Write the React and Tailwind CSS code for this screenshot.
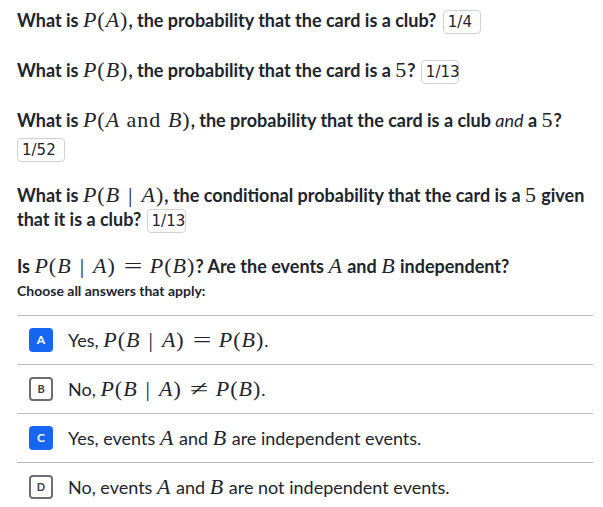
import React from "react";

const I = ({ children }) => <span className="italic">{children}</span>;

function M({ children }) {
  return (
    <span className="font-['Liberation_Serif',serif] font-normal text-[22px] leading-none tracking-[1px]">
      {children}
    </span>
  );
}

const Rel = ({ children }) => (
  <span className="inline-block w-[16px] text-center scale-x-[1.5] mx-[9px] tracking-normal">{children}</span>
);
const Bar = () => <span className="mx-[8px]">|</span>;

function Box({ children, w }) {
  return (
    <span
      className={
        "inline-block align-middle -my-[4px] border border-[#cfd1d4] rounded-[4px] pl-[4px] h-[24px] leading-[22px] font-['DejaVu_Sans',sans-serif] font-normal text-[15px] text-[#21242c] text-left whitespace-nowrap " +
        w
      }
    >
      {children}
    </span>
  );
}

function Badge({ letter, selected }) {
  return selected ? (
    <span className="w-[24px] h-[24px] shrink-0 rounded-[4px] bg-[#1865f2] text-white flex items-center justify-center text-[12px] font-bold font-['Lato',sans-serif]">
      {letter}
    </span>
  ) : (
    <span className="w-[24px] h-[24px] shrink-0 rounded-[4px] border-2 border-[#6b6d73] text-[#3b3d45] flex items-center justify-center text-[11px] font-bold font-['Lato',sans-serif]">
      {letter}
    </span>
  );
}

function Option({ letter, selected, children }) {
  return (
    <div className="flex items-center h-[49px] border-t border-[#bababe] pl-[12px]">
      <Badge letter={letter} selected={selected} />
      <div className="ml-[15px] text-[18px] leading-[24px] text-[#21242c]">{children}</div>
    </div>
  );
}

export default function App() {
  return (
    <div className="w-[603px] h-[507px] overflow-hidden bg-white pl-[17px] pr-[10px] pt-[8px] font-['Lato',sans-serif] text-[#21242c]">
      <p className="text-[18px] font-bold leading-[25px] mb-[25px]">
        What is <M><I>P</I>(<I>A</I>)</M>, the probability that the card is a club? <Box w="w-[38px] ml-[2px]">1/4</Box>
      </p>
      <p className="text-[18px] font-bold leading-[25px] mb-[25px]">
        What is <M><I>P</I>(<I>B</I>)</M>, the probability that the card is a <M>5</M>? <Box w="w-[38px] ml-[1px]">1/13</Box>
      </p>
      <div className="text-[18px] font-bold leading-[25px] mb-[22px]">
        <p>
          What is <M><I>P</I>(<I>A</I> and <I>B</I>)</M>, the probability that the card is a club <span className="italic font-normal">and</span> a <M>5</M>?
        </p>
        <p className="mt-[3px]">
          <Box w="w-[48px]">1/52</Box>
        </p>
      </div>
      <p className="text-[18px] font-bold leading-[24px] mb-[23px]">
        What is <M><I>P</I>(<I>B</I><Bar /><I>A</I>)</M>, the conditional probability that the card is a <M>5</M> given that it is a club? <Box w="w-[39px] ml-[1px]">1/13</Box>
      </p>
      <p className="text-[18px] font-bold leading-[25px]">
        Is <M><I>P</I>(<I>B</I><Bar /><I>A</I>)<Rel>=</Rel><I>P</I>(<I>B</I>)</M>? Are the events <M><I>A</I></M> and <M><I>B</I></M> independent?
      </p>
      <p className="text-[14px] font-bold leading-[20px] mt-[2px]">Choose all answers that apply:</p>
      <div className="mt-[14px] w-[576px]">
        <Option letter="A" selected>
          Yes, <M><I>P</I>(<I>B</I><Bar /><I>A</I>)<Rel>=</Rel><I>P</I>(<I>B</I>)</M>.
        </Option>
        <Option letter="B">
          No, <M><I>P</I>(<I>B</I><Bar /><I>A</I>)<Rel>≠</Rel><I>P</I>(<I>B</I>)</M>.
        </Option>
        <Option letter="C" selected>
          Yes, events <M><I>A</I></M> and <M><I>B</I></M> are independent events.
        </Option>
        <Option letter="D">
          No, events <M><I>A</I></M> and <M><I>B</I></M> are not independent events.
        </Option>
      </div>
    </div>
  );
}
